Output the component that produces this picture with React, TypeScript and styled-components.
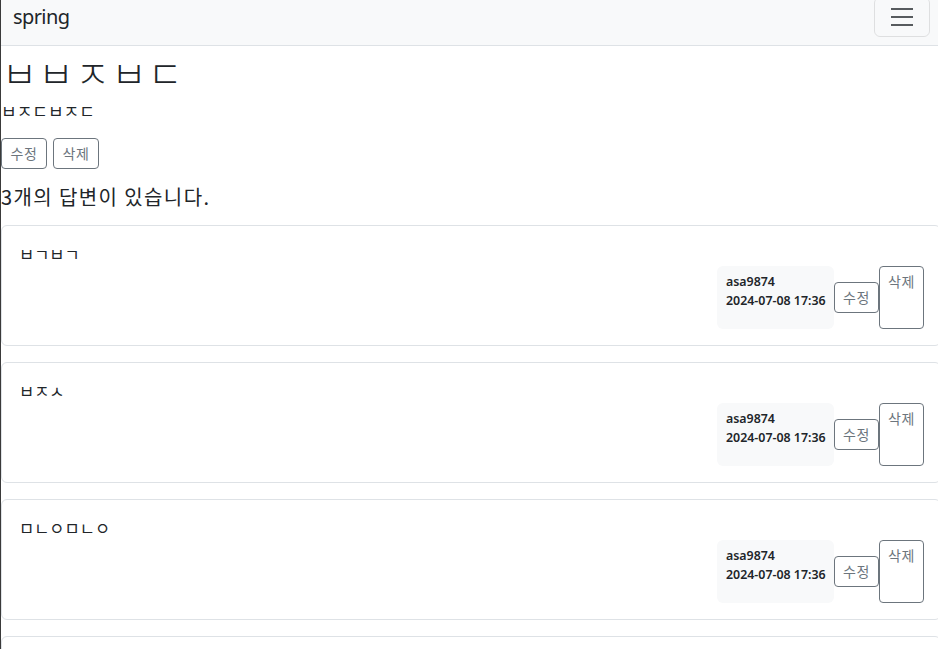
import styled, { createGlobalStyle } from "styled-components";

const GlobalStyle = createGlobalStyle`
  html, body {
    margin: 0;
    padding: 0;
    background: #fff;
    overflow: hidden;
  }
  body {
    font-family: "Noto Sans", "Noto Sans CJK KR", sans-serif;
    color: #212529;
    font-size: 16px;
  }
  * {
    box-sizing: border-box;
  }
`;

const Page = styled.div`
  min-height: 100vh;
  border-left: 1px solid #3a3a3a;
`;

const Navbar = styled.nav`
  margin-top: -11px;
  height: 57px;
  display: flex;
  align-items: center;
  justify-content: space-between;
  padding: 0 8px 0 12px;
  background: #f8f9fa;
  border-bottom: 1px solid #dee2e6;
`;

const Brand = styled.a`
  font-size: 20px;
  line-height: 30px;
  letter-spacing: -0.6px;
  color: #212529;
  text-decoration: none;
`;

const Toggler = styled.button`
  width: 56px;
  height: 40px;
  padding: 4px 12px;
  background: transparent;
  border: 1px solid rgba(0, 0, 0, 0.1);
  border-radius: 6px;
  display: flex;
  align-items: center;
  justify-content: center;
`;

const Content = styled.main`
  display: flex;
  flex-direction: column;
`;

const Title = styled.h2`
  margin: 4px 0 6px;
  padding-left: 1px;
  font-size: 38px;
  font-weight: 300;
  line-height: 43px;
  letter-spacing: 1.5px;
  font-family: "Noto Sans CJK KR", sans-serif;
`;

const Body = styled.div`
  margin: 0 0 15px;
  font-size: 17px;
  line-height: 24px;
  font-family: "Noto Sans CJK KR", sans-serif;
  white-space: pre-line;
`;

const Actions = styled.div`
  display: flex;
  gap: 6px;
`;

const OutlineButton = styled.button<{ $tall?: boolean }>`
  display: inline-flex;
  align-items: flex-start;
  justify-content: center;
  align-self: ${(p) => (p.$tall ? "stretch" : "center")};
  height: ${(p) => (p.$tall ? "auto" : "31px")};
  width: 46px;
  padding: 4px 0;
  font-family: "Noto Sans CJK KR", sans-serif;
  font-size: 14px;
  line-height: 21px;
  letter-spacing: 0.5px;
  color: #6c757d;
  background: #fff;
  border: 1px solid #6c757d;
  border-radius: 4px;
  cursor: pointer;
`;

const CardButton = styled(OutlineButton)`
  width: 45px;
`;

const AnswerCount = styled.h5`
  margin: 16px 0 16px;
  font-size: 20px;
  font-weight: 400;
  line-height: 24px;
  letter-spacing: 1.4px;
  font-family: "Noto Sans CJK KR", sans-serif;
`;

const CommentList = styled.div`
  display: flex;
  flex-direction: column;
  gap: 16px;
  margin-right: -3px;
`;

const Card = styled.div`
  border: 1px solid #dee2e6;
  border-radius: 6px;
  padding: 16px;
  background: #fff;
`;

const CardText = styled.div`
  font-family: "Noto Sans CJK KR", sans-serif;
  font-size: 16.5px;
  line-height: 24px;
  white-space: pre-line;
  padding-left: 1px;
`;

const CardFooter = styled.div`
  display: flex;
  justify-content: flex-end;
  align-items: stretch;
  height: 63px;
`;

const AuthorBadge = styled.div`
  width: 117px;
  background: #f8f9fa;
  border-radius: 6px;
  padding: 6px 6px 8px 9px;
  font-size: 12.4px;
  font-weight: 600;
  line-height: 19px;
  color: #212529;
  text-align: left;
  white-space: nowrap;
`;

interface Comment {
  id: number;
  text: string;
  author: string;
  date: string;
}

const comments: Comment[] = [
  { id: 1, text: "ㅂㄱㅂㄱ", author: "asa9874", date: "2024-07-08 17:36" },
  { id: 2, text: "ㅂㅈㅅ", author: "asa9874", date: "2024-07-08 17:36" },
  { id: 3, text: "ㅁㄴㅇㅁㄴㅇ", author: "asa9874", date: "2024-07-08 17:36" },
  { id: 4, text: "ㅂㅂㅂ", author: "asa9874", date: "2024-07-08 17:36" },
];

const TogglerIcon = () => (
  <svg width="30" height="30" viewBox="0 0 30 30">
    <path
      d="M4 7h22M4 15h22M4 23h22"
      stroke="rgba(33, 37, 41, 0.75)"
      strokeWidth="2"
      strokeMiterlimit="10"
    />
  </svg>
);

const App = () => {
  return (
    <Page>
      <GlobalStyle />
      <Navbar>
        <Brand href="#">spring</Brand>
        <Toggler type="button" aria-label="Toggle navigation">
          <TogglerIcon />
        </Toggler>
      </Navbar>
      <Content>
        <Title>ㅂㅂㅈㅂㄷ</Title>
        <Body>ㅂㅈㄷㅂㅈㄷ</Body>
        <Actions>
          <OutlineButton>수정</OutlineButton>
          <OutlineButton>삭제</OutlineButton>
        </Actions>
        <AnswerCount>3개의 답변이 있습니다.</AnswerCount>
        <CommentList>
          {comments.map((c) => (
            <Card key={c.id}>
              <CardText>{c.text}</CardText>
              <CardFooter>
                <AuthorBadge>
                  <div>{c.author}</div>
                  <div>{c.date}</div>
                </AuthorBadge>
                <CardButton>수정</CardButton>
                <CardButton $tall>삭제</CardButton>
              </CardFooter>
            </Card>
          ))}
        </CommentList>
      </Content>
    </Page>
  );
};

export default App;
